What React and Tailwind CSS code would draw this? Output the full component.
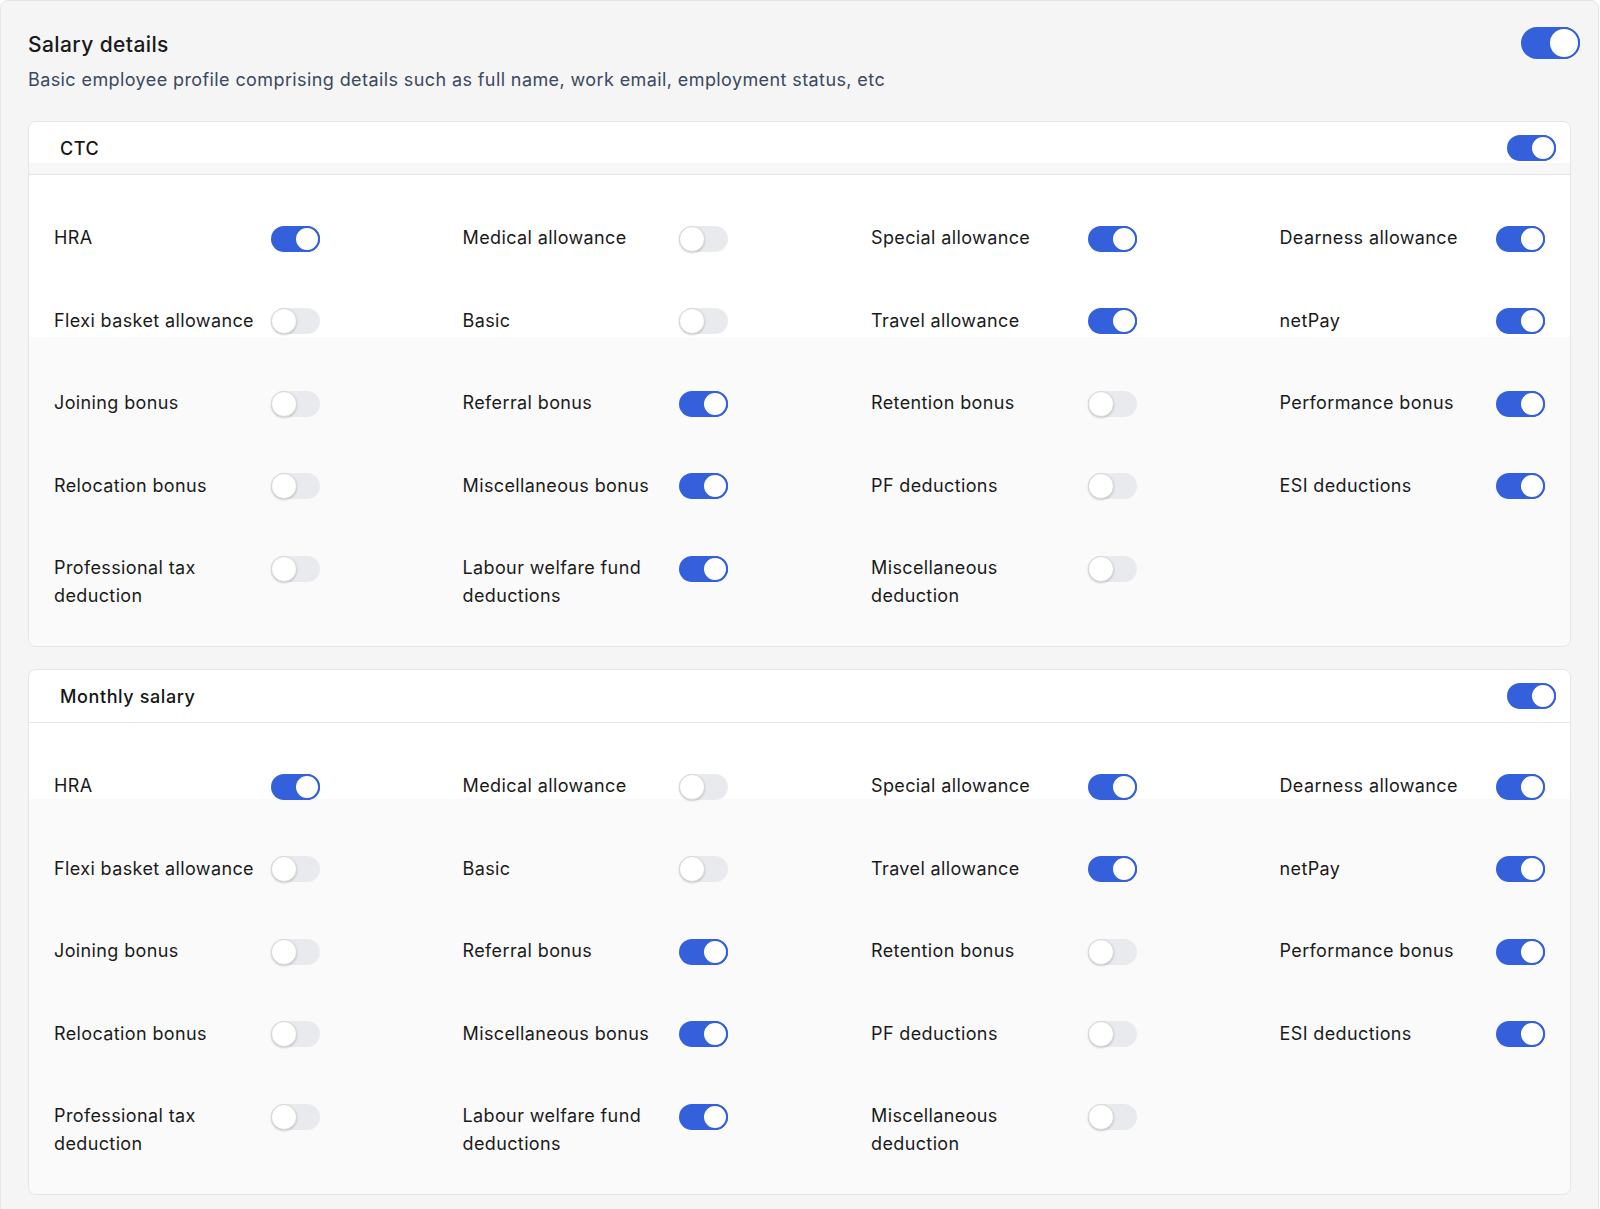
import React from "react";

const ROWS = [
  [
    ["HRA", true],
    ["Medical allowance", false],
    ["Special allowance", true],
    ["Dearness allowance", true],
  ],
  [
    ["Flexi basket allowance", false],
    ["Basic", false],
    ["Travel allowance", true],
    ["netPay", true],
  ],
  [
    ["Joining bonus", false],
    ["Referral bonus", true],
    ["Retention bonus", false],
    ["Performance bonus", true],
  ],
  [
    ["Relocation bonus", false],
    ["Miscellaneous bonus", true],
    ["PF deductions", false],
    ["ESI deductions", true],
  ],
  [
    ["Professional tax deduction", false],
    ["Labour welfare fund deductions", true],
    ["Miscellaneous deduction", false],
  ],
];

function Toggle({ on, big }) {
  const size = big ? "w-[59px] h-[32px]" : "w-[49px] h-[26px]";
  if (on) {
    return (
      <div className={`${size} shrink-0 rounded-full bg-[#3461db] flex justify-end`}>
        <div className="h-full aspect-square rounded-full bg-white border-2 border-[#3461db]" />
      </div>
    );
  }
  return (
    <div className={`${size} shrink-0 rounded-full bg-[#e9eaee] flex justify-start`}>
      <div className="h-full aspect-square rounded-full bg-white border border-[#d6d8dd] shadow-[0_1px_2px_rgba(0,0,0,0.18)]" />
    </div>
  );
}

function Card({ title, headerBg, bodyBg }) {
  return (
    <div className="rounded-lg border border-[#e3e5e9] overflow-hidden">
      <div
        className={`h-[53px] flex items-center justify-between pl-[31px] pr-[14px] border-b border-[#e3e5e9] ${headerBg}`}
      >
        <span className="pt-[2px] text-[18px] leading-[28px] font-medium tracking-[0.6px] text-[#151515]">
          {title}
        </span>
        <Toggle on />
      </div>
      <div
        className={`grid grid-cols-4 gap-x-[143px] gap-y-[54.5px] px-[25px] pt-[49px] pb-[36px] ${bodyBg}`}
      >
        {ROWS.flat().map(([label, on], i) => (
          <div key={i} className="flex items-start justify-between">
            <span className="w-[212px] text-[18px] leading-[28px] tracking-[0.38px] text-[#1a1a1a]">
              {label}
            </span>
            <div className="mt-[1.5px]">
              <Toggle on={on} />
            </div>
          </div>
        ))}
      </div>
    </div>
  );
}

export default function App() {
  return (
    <div
      className="min-h-[1209px] bg-white"
      style={{ fontFamily: "Inter, 'Noto Sans', sans-serif" }}
    >
      <div className="w-[1599px] rounded-lg border border-[#e3e5e9] bg-[#f5f5f5] px-[27px] pt-[30px] pb-[27px]">
        <div className="flex items-start justify-between">
          <div className="flex flex-col">
            <h1 className="text-[21px] leading-[28px] font-medium tracking-[0.4px] text-[#1a1a1a]">
              Salary details
            </h1>
            <p className="mt-[7px] text-[18px] leading-[28px] tracking-[0.4px] text-[#3a4861]">
              Basic employee profile comprising details such as full name, work email, employment status, etc
            </p>
          </div>
          <div className="-mt-[4px] -mr-[9px]">
            <Toggle on big />
          </div>
        </div>
        <div className="mt-[27px] flex flex-col gap-[22px]">
          <Card
            title="CTC"
            headerBg="bg-[linear-gradient(to_bottom,#ffffff_41px,#f7f7f8_41px)]"
            bodyBg="bg-[linear-gradient(to_bottom,#ffffff_162px,#fafafa_162px)]"
          />
          <Card
            title="Monthly salary"
            headerBg="bg-white"
            bodyBg="bg-[linear-gradient(to_bottom,#ffffff_76px,#fafafa_76px)]"
          />
        </div>
      </div>
    </div>
  );
}
